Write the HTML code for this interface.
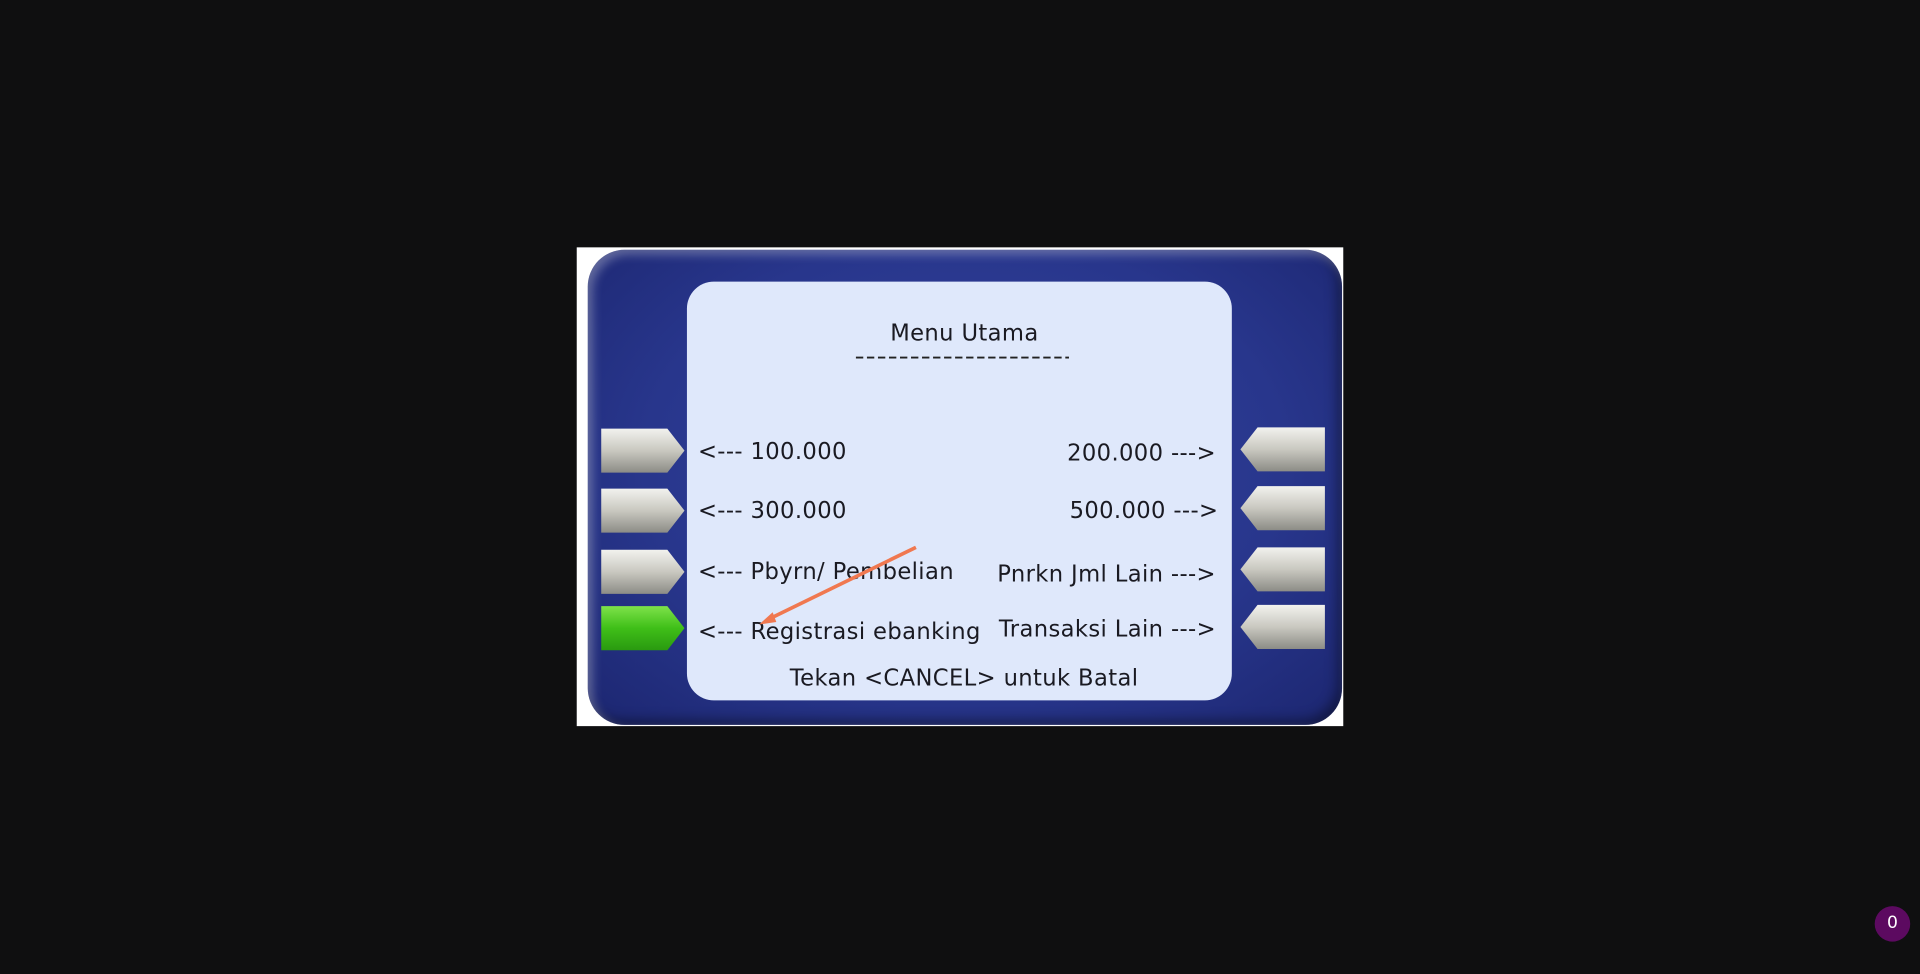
<!DOCTYPE html>
<html><head><style>
html,body{margin:0;padding:0;width:1920px;height:974px;overflow:hidden;background:#0f0f10;}
#w{position:absolute;left:0;top:0;width:1568px;height:795px;transform:scale(1.22449);transform-origin:0 0;}
.img{position:absolute;left:471px;top:202px;width:626px;height:391px;background:#fff;overflow:hidden;}
.frame{position:absolute;left:9px;top:2px;width:616px;height:388px;border-radius:30px;background:radial-gradient(ellipse at 50% 45%,#34449f 0%,#28368c 60%,#1c2670 100%);box-shadow:inset 4px 4px 8px rgba(255,255,255,.3),inset -4px -4px 10px rgba(0,0,0,.4);}
.screen{position:absolute;left:90px;top:28px;width:445px;height:342px;border-radius:22px;background:#dfe8fb;}
.t{position:absolute;font-family:"DejaVu Sans","Liberation Sans",sans-serif;font-size:18.5px;color:#1a1a22;white-space:nowrap;letter-spacing:0.3px;}
</style></head><body><div id="w">
<div class="img">
<div class="frame"></div>
<div class="screen"></div>
<svg width="626" height="391" style="position:absolute;left:0;top:0">
<defs>
<linearGradient id="g" x1="0" y1="0" x2="0" y2="1"><stop offset="0" stop-color="#f2f2ee"/><stop offset=".5" stop-color="#c9c8c0"/><stop offset="1" stop-color="#8c8c86"/></linearGradient>
<linearGradient id="gg" x1="0" y1="0" x2="0" y2="1"><stop offset="0" stop-color="#7ee24a"/><stop offset=".5" stop-color="#3fbf18"/><stop offset="1" stop-color="#2a9a10"/></linearGradient>
</defs>
<polygon points="20,148 74,148 88,166 74,184 20,184" fill="url(#g)"/>
<polygon points="20,197 74,197 88,215 74,233 20,233" fill="url(#g)"/>
<polygon points="20,247 74,247 88,265 74,283 20,283" fill="url(#g)"/>
<polygon points="20,293 74,293 88,311 74,329 20,329" fill="url(#gg)"/>
<polygon points="611,147 556,147 542,165 556,183 611,183" fill="url(#g)"/>
<polygon points="611,195 556,195 542,213 556,231 611,231" fill="url(#g)"/>
<polygon points="611,245 556,245 542,263 556,281 611,281" fill="url(#g)"/>
<polygon points="611,292 556,292 542,310 556,328 611,328" fill="url(#g)"/>
<line x1="228" y1="90" x2="402" y2="90" stroke="#222" stroke-width="1.5" stroke-dasharray="6,3"/>
</svg>
<div class="t" style="left:256px;top:60px">Menu Utama</div>
<div class="t" style="left:99px;top:157px">&lt;--- 100.000</div>
<div class="t" style="left:99px;top:205px">&lt;--- 300.000</div>
<div class="t" style="left:99px;top:255px">&lt;--- Pbyrn/ Pembelian</div>
<div class="t" style="left:99px;top:304px">&lt;--- Registrasi ebanking</div>
<div class="t" style="right:104px;top:158px">200.000 ---&gt;</div>
<div class="t" style="right:102px;top:205px">500.000 ---&gt;</div>
<div class="t" style="right:104px;top:257px">Pnrkn Jml Lain ---&gt;</div>
<div class="t" style="right:104px;top:302px">Transaksi Lain ---&gt;</div>
<div class="t" style="left:174px;top:342px">Tekan &lt;CANCEL&gt; untuk Batal</div>
<svg width="626" height="391" style="position:absolute;left:0;top:0">
<line x1="277" y1="245" x2="156" y2="304" stroke="#f07850" stroke-width="3"/>
<polygon points="149,308 160,298 163,306" fill="#f07850"/>
</svg>
</div>
<div style="position:absolute;left:1531px;top:740px;width:29px;height:29px;border-radius:50%;background:#5c0a60;color:#fff;font:14px 'DejaVu Sans',sans-serif;text-align:center;line-height:29px">0</div>
</div></body></html>
